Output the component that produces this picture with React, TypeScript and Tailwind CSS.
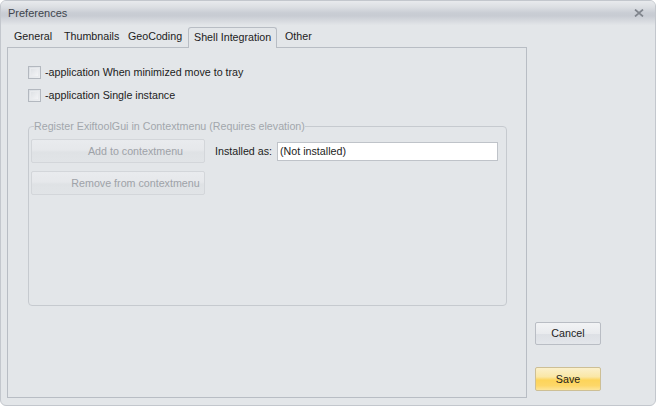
import React from 'react';

const Checkbox: React.FC<{ label: string }> = ({ label }) => (
  <div className="flex items-center h-[23px]">
    <div className="w-[13px] h-[13px] border border-[#b3b8bf] bg-[linear-gradient(135deg,#d9dde2_0%,#eef0f2_100%)] p-[1px]">
      <div className="w-full h-full border border-[#e9ebee] bg-[linear-gradient(135deg,#dfe2e6_0%,#f3f4f6_100%)]" />
    </div>
    <span className="ml-[4px] text-[10.7px] text-[#1c1c1c]">{label}</span>
  </div>
);

const DisabledButton: React.FC<{ label: string; className?: string }> = ({ label, className }) => (
  <div
    className={`w-[174px] h-[24px] flex items-center justify-center pl-[35px] rounded-[2px] border border-[#d3d6da] bg-[linear-gradient(to_bottom,#e9ebee_0%,#e6e8eb_45%,#dfe2e5_55%,#e1e4e7_100%)] text-[10.7px] text-[#9ea2a8] ${className ?? ''}`}
  >
    {label}
  </div>
);

const App: React.FC = () => {
  const tabs = [
    { name: 'General', w: 'w-[50px]' },
    { name: 'Thumbnails', w: 'w-[64px]' },
    { name: 'GeoCoding', w: 'w-[66px]' },
  ];

  return (
    <div className="w-[656px] h-[408px] bg-white font-['Liberation_Sans',Arial,sans-serif]">
      <div className="w-[656px] h-[406px] rounded-[6px] border border-[#c3c7cd] bg-[#e3e6e9] overflow-hidden flex flex-col">
        {/* title bar */}
        <div className="h-[24px] shrink-0 flex items-center justify-between px-[7px] bg-[linear-gradient(to_bottom,#e8eaed_0%,#dcdfe3_25%,#c9cdd4_50%,#c8ccd3_62%,#d8dbe0_85%,#e2e5e8_100%)]">
          <span className="text-[11px] text-[#40454d]">Preferences</span>
          <svg width="10" height="8" viewBox="0 0 10 8" className="mr-[4px]">
            <path d="M1 0.5 L9 7.5 M9 0.5 L1 7.5" stroke="#80858d" strokeWidth="1.7" />
          </svg>
        </div>

        <div className="flex flex-1">
          {/* left: tabs + panel */}
          <div className="ml-[6px] w-[520px] flex flex-col">
            <div className="h-[22px] flex items-end ml-[1px]">
              {tabs.map((t) => (
                <div key={t.name} className={`${t.w} h-[22px] flex items-center pl-[6px] text-[10.7px] text-[#1c1c1c]`}>
                  {t.name}
                </div>
              ))}
              <div className="relative z-10 -mb-px w-[89px] h-[21px] flex items-center pl-[5px] pb-[1px] rounded-t-[3px] border border-b-0 border-[#b8bdc4] bg-[#e3e6e9] text-[10.7px] text-[#1c1c1c]">
                Shell Integration
              </div>
              <div className="h-[22px] flex items-center pl-[8px] text-[10.7px] text-[#1c1c1c]">Other</div>
            </div>

            <div className="h-[351px] border border-[#b8bdc4] pt-[13px] pl-[20px]">
              <Checkbox label="-application When minimized move to tray" />
              <Checkbox label="-application Single instance" />

              <div className="relative mt-[19px] w-[479px] h-[180px] rounded-[4px] border border-[#c6cacf]">
                <span className="absolute -top-[8px] left-[5px] bg-[#e3e6e9] text-[10.7px] leading-[14px] text-[#a2a6ac]">
                  Register ExiftoolGui in Contextmenu (Requires elevation)
                </span>
                <div className="flex">
                  <div className="ml-[2px] mt-[12px] flex flex-col gap-[8px]">
                    <DisabledButton label="Add to contextmenu" />
                    <DisabledButton label="Remove from contextmenu" className="h-[23px]" />
                  </div>
                  <div className="ml-[10px] mt-[15px] flex items-center h-[19px]">
                    <span className="text-[10.7px] text-[#1c1c1c]">Installed as:</span>
                    <div className="ml-[5px] w-[221px] h-[19px] flex items-center pl-[2px] border border-[#bfc3c9] bg-white text-[10.7px] text-[#1c1c1c]">
                      (Not installed)
                    </div>
                  </div>
                </div>
              </div>
            </div>
          </div>

          {/* right: buttons */}
          <div className="flex flex-col pl-[8px] pt-[297px]">
            <div className="w-[66px] h-[23px] flex items-center justify-center rounded-[2px] border border-[#b9bdc4] bg-[linear-gradient(to_bottom,#f2f3f5_0%,#e9ebee_50%,#dde0e5_55%,#e3e6ea_100%)] text-[10.7px] text-[#1c1c1c]">
              Cancel
            </div>
            <div className="mt-[22px] w-[66px] h-[24px] flex items-center justify-center rounded-[2px] border border-[#cdbf95] bg-[linear-gradient(to_bottom,#fbf0cb_0%,#fae7a6_40%,#fdd45a_55%,#fdd768_80%,#fde59a_100%)] text-[10.7px] text-[#1c1c1c]">
              Save
            </div>
          </div>
        </div>
      </div>
    </div>
  );
};

export default App;
